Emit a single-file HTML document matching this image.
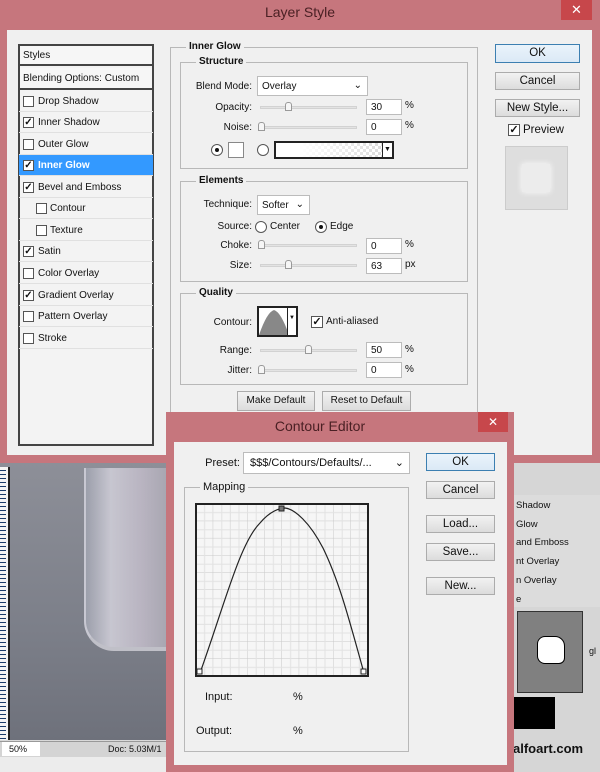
<!DOCTYPE html>
<html><head><style>
*{box-sizing:border-box;margin:0;padding:0}
body{width:600px;height:772px;overflow:hidden;position:relative;background:#d9d9d9;font-family:"Liberation Sans",sans-serif;font-size:10px;color:#111}
.a{position:absolute}
.pink{background:#c6767d}
.pane{background:#f0f0f0}
.btn{position:absolute;background:linear-gradient(#f2f2f2,#dcdcdc);border:1px solid #acacac;text-align:center;font-size:11.5px;color:#111}
.btn.ok{border-color:#3c7fb1;background:linear-gradient(#eaf3fb,#dbe9f6)}
.grp{position:absolute;border:1px solid #b8b8b8}
.lg{position:absolute;background:#f0f0f0;font-weight:bold;padding:0 3px;font-size:10px}
.lbl{position:absolute;text-align:right;font-size:10px}
.inp{position:absolute;background:#fff;border:1px solid #bcbcbc;font-size:10px;padding:2px 4px}
.sl{position:absolute;height:3px;background:#e3e3e3;border:1px solid #d2d2d2}
.th{position:absolute;width:7px;height:9px;border:1px solid #999;background:#f6f6f6;border-radius:3px 3px 0 0}
.row{position:absolute;left:19px;width:134px;height:21px;border-bottom:1px solid #e0e0e0;font-size:10px;line-height:21px;padding-left:19px}
.cb{position:absolute;left:4px;top:5px;width:11px;height:11px;border:1px solid #555;background:#fff;font-size:10px;line-height:9px;text-align:center;font-weight:bold}
.rad{position:absolute;width:12px;height:12px;border:1px solid #555;border-radius:50%;background:#fff}
.dot{position:absolute;left:3px;top:3px;width:4px;height:4px;border-radius:50%;background:#111}
</style></head><body>
<div class="a pink" style="left:0;top:0;width:600px;height:463px"></div>
<div class="a" style="left:0;top:4px;width:600px;text-align:center;font-size:14px;color:#4a2024">Layer Style</div>
<div class="a" style="left:561px;top:0;width:31px;height:20px;background:#c7474b;color:#fff;text-align:center;font-size:13px;line-height:20px">✕</div>
<div class="a pane" style="left:7px;top:30px;width:585px;height:425px"></div>

<div class="a" style="left:18px;top:44px;width:136px;height:402px;border:2px solid #444;background:#f3f3f3"></div>
<div class="a" style="left:20px;top:46px;width:132px;height:20px;background:#f6f6f6;border-bottom:2px solid #444;padding:4px 3px">Styles</div>
<div class="a" style="left:20px;top:68px;width:132px;height:22px;background:#f6f6f6;border-bottom:2px solid #444;padding:5px 3px">Blending Options: Custom</div>
<div class="row" style="top:91px">Drop Shadow<div class="cb"></div></div>
<div class="row" style="top:112px">Inner Shadow<div class="cb">✓</div></div>
<div class="row" style="top:134px">Outer Glow<div class="cb"></div></div>
<div class="row" style="top:155px;background:#3399ff;color:#fff;font-weight:bold">Inner Glow<div class="cb" style="color:#111">✓</div></div>
<div class="row" style="top:177px">Bevel and Emboss<div class="cb">✓</div></div>
<div class="row" style="top:198px;padding-left:31px">Contour<div class="cb" style="left:17px"></div></div>
<div class="row" style="top:220px;padding-left:31px">Texture<div class="cb" style="left:17px"></div></div>
<div class="row" style="top:241px">Satin<div class="cb">✓</div></div>
<div class="row" style="top:263px">Color Overlay<div class="cb"></div></div>
<div class="row" style="top:285px">Gradient Overlay<div class="cb">✓</div></div>
<div class="row" style="top:306px">Pattern Overlay<div class="cb"></div></div>
<div class="row" style="top:328px">Stroke<div class="cb"></div></div>

<div class="grp" style="left:170px;top:47px;width:308px;height:370px"></div>
<div class="lg" style="left:186px;top:41px">Inner Glow</div>
<div class="grp" style="left:180px;top:62px;width:288px;height:107px"></div>
<div class="lg" style="left:196px;top:56px">Structure</div>
<div class="lbl" style="left:180px;top:81px;width:72px">Blend Mode:</div>
<div class="inp" style="left:257px;top:76px;width:111px;height:20px;padding:4px">Overlay<span style="position:absolute;right:5px;top:3px">⌄</span></div>
<div class="lbl" style="left:180px;top:102px;width:72px">Opacity:</div>
<div class="sl" style="left:260px;top:106px;width:97px"></div><div class="th" style="left:285px;top:102px"></div>
<div class="inp" style="left:366px;top:99px;width:36px;height:16px">30</div><div class="a" style="left:405px;top:100px">%</div>
<div class="lbl" style="left:180px;top:122px;width:72px">Noise:</div>
<div class="sl" style="left:260px;top:126px;width:97px"></div><div class="th" style="left:258px;top:122px"></div>
<div class="inp" style="left:366px;top:119px;width:36px;height:16px">0</div><div class="a" style="left:405px;top:120px">%</div>
<div class="rad" style="left:211px;top:144px"><div class="dot"></div></div>
<div class="a" style="left:228px;top:142px;width:16px;height:16px;border:1px solid #888;background:#fff"></div>
<div class="rad" style="left:257px;top:144px"></div>
<div class="a" style="left:274px;top:141px;width:120px;height:18px;border:2px solid #222;background:linear-gradient(90deg,#fff 20%,rgba(255,255,255,0) 90%),repeating-conic-gradient(#ddd 0 25%,#fff 0 50%) 0 0/6px 6px;"></div>
<div class="a" style="left:382px;top:143px;width:10px;height:14px;background:#fff;border-left:1px solid #222;font-size:7px;text-align:center;line-height:14px">▼</div>

<div class="grp" style="left:180px;top:181px;width:288px;height:101px"></div>
<div class="lg" style="left:196px;top:175px">Elements</div>
<div class="lbl" style="left:180px;top:199px;width:72px">Technique:</div>
<div class="inp" style="left:257px;top:195px;width:53px;height:20px;padding:4px">Softer<span style="position:absolute;right:5px;top:3px">⌄</span></div>
<div class="lbl" style="left:180px;top:221px;width:72px">Source:</div>
<div class="rad" style="left:255px;top:221px"></div><div class="a" style="left:270px;top:221px">Center</div>
<div class="rad" style="left:315px;top:221px"><div class="dot"></div></div><div class="a" style="left:330px;top:221px">Edge</div>
<div class="lbl" style="left:180px;top:240px;width:72px">Choke:</div>
<div class="sl" style="left:260px;top:244px;width:97px"></div><div class="th" style="left:258px;top:240px"></div>
<div class="inp" style="left:366px;top:238px;width:36px;height:16px">0</div><div class="a" style="left:405px;top:239px">%</div>
<div class="lbl" style="left:180px;top:260px;width:72px">Size:</div>
<div class="sl" style="left:260px;top:264px;width:97px"></div><div class="th" style="left:285px;top:260px"></div>
<div class="inp" style="left:366px;top:258px;width:36px;height:16px">63</div><div class="a" style="left:405px;top:259px">px</div>

<div class="grp" style="left:180px;top:293px;width:288px;height:92px"></div>
<div class="lg" style="left:196px;top:287px">Quality</div>
<div class="lbl" style="left:180px;top:317px;width:72px">Contour:</div>
<div class="a" style="left:257px;top:306px;width:41px;height:31px;border:2px solid #222;background:#fff;overflow:hidden">
<svg width="30" height="27" style="position:absolute;left:0;top:0"><path d="M0 27 Q8 4 15 2 Q22 4 30 27Z" fill="#888"/></svg>
<div class="a" style="left:28px;top:0;width:9px;height:27px;border-left:1px solid #222;background:#fff;font-size:6px;line-height:20px;text-align:center">▼</div></div>
<div class="a" style="left:311px;top:316px;width:12px;height:12px;border:1px solid #555;background:#fff;font-weight:bold;font-size:11px;line-height:10px;text-align:center">✓</div>
<div class="a" style="left:326px;top:316px">Anti-aliased</div>
<div class="lbl" style="left:180px;top:345px;width:72px">Range:</div>
<div class="sl" style="left:260px;top:349px;width:97px"></div><div class="th" style="left:305px;top:345px"></div>
<div class="inp" style="left:366px;top:342px;width:36px;height:16px">50</div><div class="a" style="left:405px;top:344px">%</div>
<div class="lbl" style="left:180px;top:365px;width:72px">Jitter:</div>
<div class="sl" style="left:260px;top:369px;width:97px"></div><div class="th" style="left:258px;top:365px"></div>
<div class="inp" style="left:366px;top:362px;width:36px;height:16px">0</div><div class="a" style="left:405px;top:364px">%</div>
<div class="btn" style="left:237px;top:391px;width:78px;height:20px;font-size:10px;line-height:18px">Make Default</div>
<div class="btn" style="left:322px;top:391px;width:89px;height:20px;font-size:10px;line-height:18px">Reset to Default</div>

<div class="btn ok" style="left:495px;top:44px;width:85px;height:19px;line-height:17px">OK</div>
<div class="btn" style="left:495px;top:72px;width:85px;height:18px;line-height:16px">Cancel</div>
<div class="btn" style="left:495px;top:99px;width:85px;height:18px;line-height:16px">New Style...</div>
<div class="a" style="left:508px;top:124px;width:12px;height:12px;border:1px solid #555;background:#fff;font-weight:bold;font-size:11px;line-height:10px;text-align:center">✓</div>
<div class="a" style="left:523px;top:124px;font-size:11.5px">Preview</div>
<div class="a" style="left:505px;top:146px;width:63px;height:64px;background:#dedede;border:1px solid #ccc"><div class="a" style="left:16px;top:17px;width:28px;height:28px;background:#ececec;box-shadow:0 0 6px #fff"></div></div>

<div class="a" style="left:0;top:463px;width:167px;height:277px;background:linear-gradient(180deg,#8d8f98,#7c7f89 60%,#6e717b)"></div>
<div class="a" style="left:0;top:467px;width:10px;height:273px;background:#f4f4f4;border-right:2px solid #222"></div>
<div class="a" style="left:0;top:467px;width:6px;height:273px;background:repeating-linear-gradient(transparent 0 3px,#1a3b6a 3px 4px)"></div>
<div class="a" style="left:84px;top:468px;width:84px;height:183px;border-radius:0 0 0 30px;background:linear-gradient(90deg,#9c9fab,#c7c6d0 30%,#b8b3c0 70%,#a7a6b0);border-left:2px solid #c8c8d2;border-bottom:4px solid #c0c0c8"></div>
<div class="a" style="left:0;top:741px;width:167px;height:16px;background:#d4d4d4;border-top:1px solid #999"></div>
<div class="a" style="left:2px;top:742px;width:38px;height:14px;background:#fff;font-size:9px;padding:2px 7px">50%</div>
<div class="a" style="left:108px;top:744px;font-size:9px">Doc: 5.03M/1</div>
<div class="a" style="left:0;top:757px;width:167px;height:15px;background:#ececec"></div>

<div class="a" style="left:513px;top:463px;width:87px;height:309px;background:#d6d6d6"></div>
<div class="a" style="left:513px;top:495px;width:87px;height:112px;background:#dcdcdc"></div>
<div class="a" style="left:516px;top:497px;font-size:9.5px;line-height:18.7px">Shadow<br>Glow<br>and Emboss<br>nt Overlay<br>n Overlay<br>e</div>
<div class="a" style="left:517px;top:611px;width:66px;height:82px;background:#808080;border:1px solid #333"><div class="a" style="left:19px;top:24px;width:28px;height:28px;background:#fff;border:1px solid #000;border-radius:8px 10px 6px 8px"></div></div>
<div class="a" style="left:589px;top:646px;font-size:9px">gl</div>
<div class="a" style="left:513px;top:697px;width:42px;height:32px;background:#000"></div>
<div class="a" style="left:513px;top:741px;font-size:13px;font-weight:bold;color:#111">alfoart.com</div>

<div class="a pink" style="left:166px;top:412px;width:348px;height:360px"></div>
<div class="a" style="left:166px;top:418px;width:348px;text-align:center;font-size:14px;color:#4a2024;padding-right:40px">Contour Editor</div>
<div class="a" style="left:478px;top:412px;width:30px;height:20px;background:#c7474b;color:#fff;text-align:center;font-size:12px;line-height:20px">✕</div>
<div class="a pane" style="left:174px;top:442px;width:333px;height:323px"></div>
<div class="lbl" style="left:190px;top:457px;width:50px;font-size:11px">Preset:</div>
<div class="inp" style="left:243px;top:452px;width:167px;height:22px;font-size:11px;padding:4px 6px">$$$/Contours/Defaults/...<span style="position:absolute;right:5px;top:3px">⌄</span></div>
<div class="btn ok" style="left:426px;top:453px;width:69px;height:18px;line-height:16px">OK</div>
<div class="btn" style="left:426px;top:481px;width:69px;height:18px;line-height:16px">Cancel</div>
<div class="btn" style="left:426px;top:515px;width:69px;height:18px;line-height:16px">Load...</div>
<div class="btn" style="left:426px;top:543px;width:69px;height:18px;line-height:16px">Save...</div>
<div class="btn" style="left:426px;top:577px;width:69px;height:18px;line-height:16px">New...</div>
<div class="grp" style="left:184px;top:487px;width:225px;height:265px"></div>
<div class="lg" style="left:200px;top:481px;font-weight:normal;font-size:11px">Mapping</div>
<svg class="a" style="left:195px;top:503px" width="174" height="174">
<defs><pattern id="g" width="17.2" height="17.2" patternUnits="userSpaceOnUse" x="1" y="1"><path d="M17.2 0V17.2H0" fill="none" stroke="#c8c8c8" stroke-width="1"/><path d="M8.6 0V17.2M0 8.6H17.2" stroke="#e2e2e2" stroke-width="1"/></pattern></defs>
<rect x="1" y="1" width="172" height="172" fill="#f6f6f6"/>
<rect x="1" y="1" width="172" height="172" fill="url(#g)"/>
<rect x="1" y="1" width="172" height="172" fill="none" stroke="#222" stroke-width="2"/>
<path d="M5 170 C30 100 45 40 65 20 C75 8 85 5 90 5 C100 6 115 20 128 45 C145 80 155 120 169 170" fill="none" stroke="#222" stroke-width="1.2"/>
<rect x="2" y="166" width="5" height="5" fill="#fff" stroke="#222"/><rect x="166" y="166" width="5" height="5" fill="#fff" stroke="#222"/><rect x="84" y="3" width="5" height="5" fill="#777" stroke="#222"/>
</svg>
<div class="a" style="left:205px;top:691px;font-size:11px">Input:</div>
<div class="a" style="left:293px;top:691px;font-size:11px">%</div>
<div class="a" style="left:196px;top:725px;font-size:11px">Output:</div>
<div class="a" style="left:293px;top:725px;font-size:11px">%</div>
</body></html>
